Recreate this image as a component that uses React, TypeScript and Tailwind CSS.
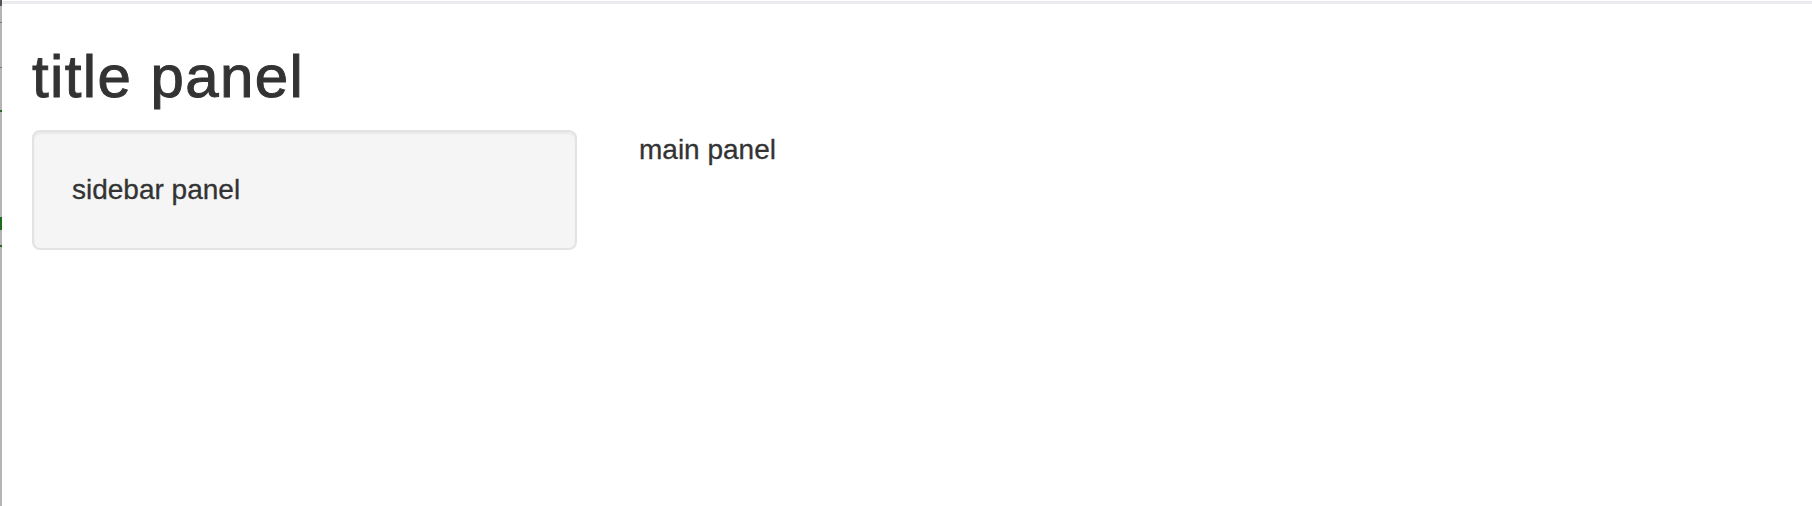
export default function App() {
  return (
    <div
      className="flex min-h-screen bg-white text-[#333333]"
      style={{ fontFamily: '"Liberation Sans", Arial, sans-serif' }}
    >
      <div className="flex w-[2px] shrink-0 flex-col bg-[#b4b4b4]">
        <div className="h-[6px] bg-[#555555]" />
        <div className="mt-[16px] h-[1px] bg-[#7a7a7a]" />
        <div className="mt-[44px] h-[1px] bg-[#7a7a7a]" />
        <div className="mt-[42px] h-[2px] bg-[#1d6b1d]" />
        <div className="mt-[105px] h-[13px] bg-[#1d6b1d]" />
        <div className="mt-[15px] h-[2px] bg-[#1d6b1d]" />
      </div>
      <div className="flex min-w-0 flex-1 flex-col">
        <div className="h-[4px] border-t border-white bg-[#ebebef]" />
        <div className="px-[30px]">
          <h2 className="mt-[40px] mb-[20px] text-[60px] leading-[66px] font-normal tracking-[1.4px] [-webkit-text-stroke:1px_#333333]">
            title panel
          </h2>
          <div className="-mx-[30px] flex">
            <div className="w-[605px] shrink-0 px-[30px]">
              <div className="rounded-[8px] border-2 border-[#e3e3e3] bg-[#f5f5f5] p-[38px] text-[28px] leading-[40px] [-webkit-text-stroke:0.3px_#333333] shadow-[inset_0_2px_2px_rgba(0,0,0,0.05)]">
                sidebar panel
              </div>
            </div>
            <div className="min-w-0 flex-1 pl-[32px] pr-[30px] text-[28px] leading-[40px] [-webkit-text-stroke:0.3px_#333333]">
              main panel
            </div>
          </div>
        </div>
      </div>
    </div>
  );
}
